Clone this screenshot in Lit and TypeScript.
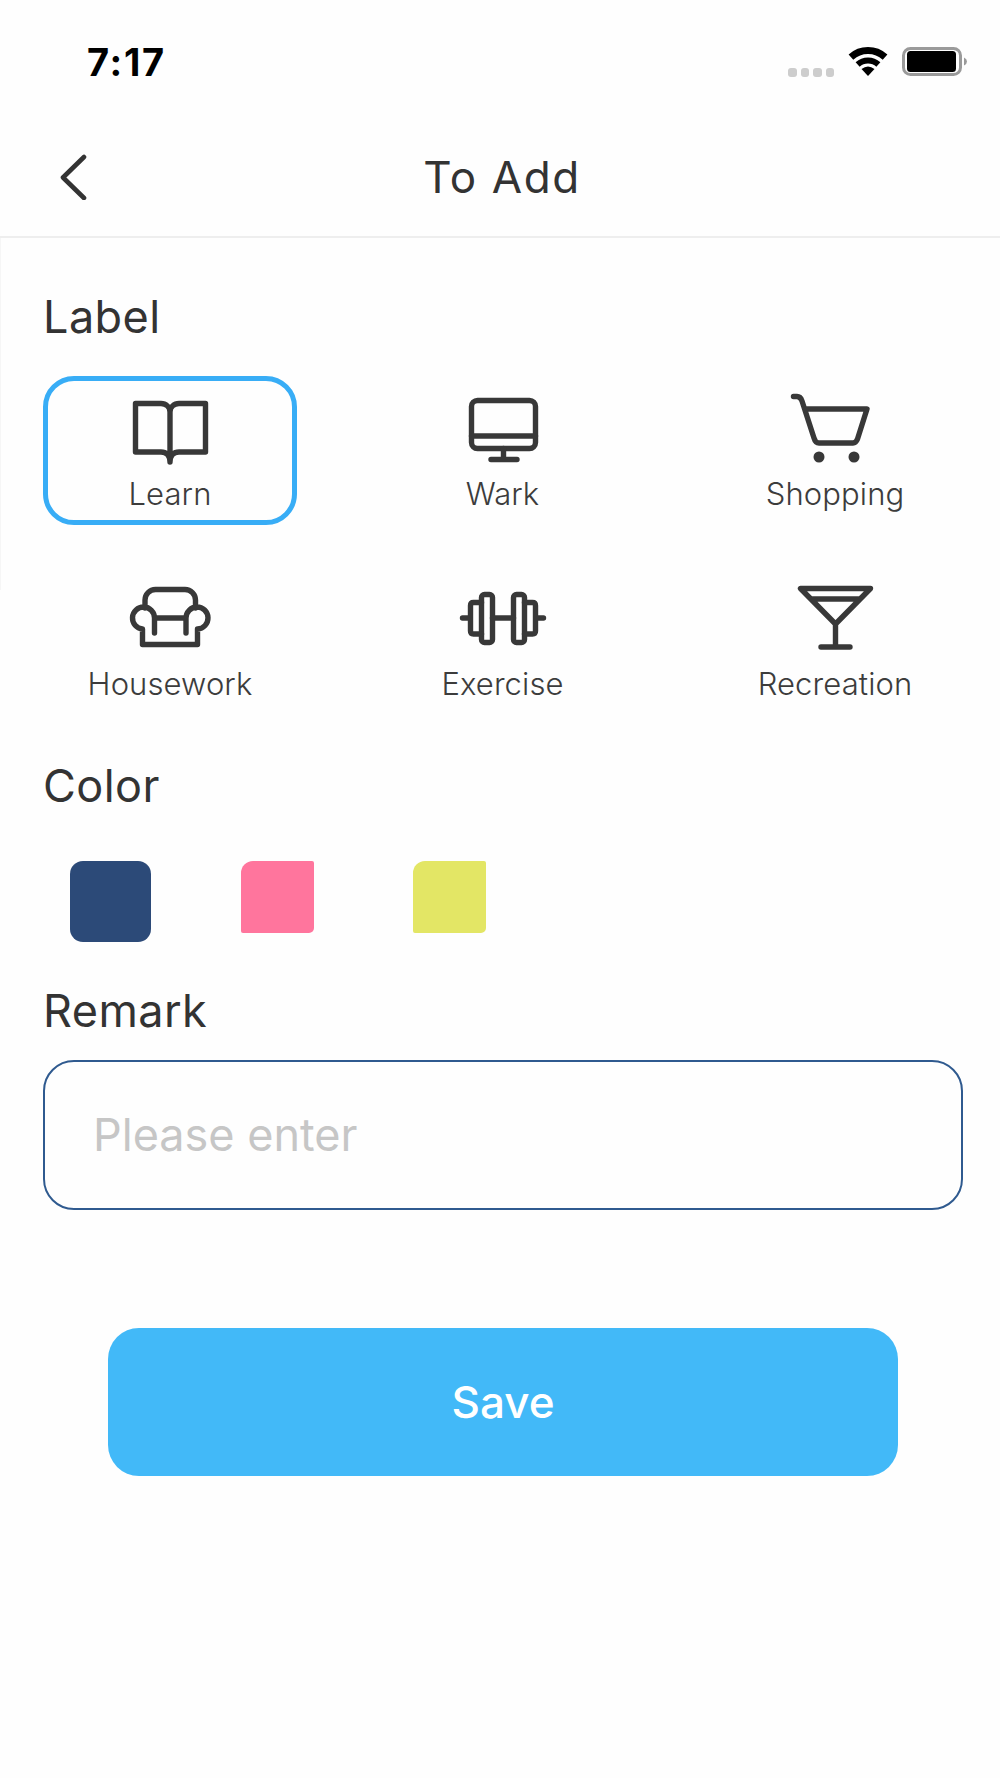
import { LitElement, html, css, svg } from "lit";
import { customElement } from "lit/decorators.js";

const ICONS = {
  learn: svg`<path d="M45 69V19C45 14 41 10.5 36 10.5H10.5V59H36C41 59 45 62 45 69C45 62 49 59 54 59H80.5V10.5H54C49 10.5 45 14 45 19"/>`,
  wark: svg`<rect x="13.5" y="7.5" width="64" height="48" rx="6"/><path d="M13.5 43H77.5M45.5 55.5V66.5M33 66.5H59"/>`,
  shopping: svg`<path d="M3.5 3.5H7C10 3.5 11 5 12 8L24 45C25 48.5 26.5 50 29 50H63C65.5 50 66.5 48.5 67.5 46L77 16H16"/><circle class="fill" cx="29" cy="64" r="5.5"/><circle class="fill" cx="64" cy="64" r="5.5"/>`,
  housework: svg`<path d="M29.5 50V35A11 11 0 1 0 17.5 46V61.5H72.5V46A11 11 0 1 0 61 35V50M29.5 35H61M20 25V17A10.5 10.5 0 0 1 30.5 6.5H60A10.5 10.5 0 0 1 70.5 17V25"/>`,
  exercise: svg`<rect x="23.5" y="11.5" width="11" height="48" rx="3"/><rect x="55.5" y="11.5" width="11" height="48" rx="3"/><path d="M23.5 19.5H15.5Q12.5 19.5 12.5 22.5V48Q12.5 51 15.5 51H23.5M66.5 19.5H74.5Q77.5 19.5 77.5 22.5V48Q77.5 51 74.5 51H66.5M4.5 35H12.5M77.5 35H85.5M34.5 35H55.5"/>`,
  recreation: svg`<path d="M10.5 5.5H80.5L45.5 41ZM21 16H70M45.5 41V64M31 64H60"/>`,
};

const TILES: [keyof typeof ICONS, string][] = [
  ["learn", "Learn"],
  ["wark", "Wark"],
  ["shopping", "Shopping"],
  ["housework", "Housework"],
  ["exercise", "Exercise"],
  ["recreation", "Recreation"],
];

@customElement("app-root")
export class AppRoot extends LitElement {
  static styles = css`
    :host {
      display: block;
      width: 1000px;
      height: 1778px;
      background: #fefefe;
      font-family: Inter, "Liberation Sans", sans-serif;
      color: #333;
      overflow: hidden;
      position: relative;
    }
    .edge {
      position: absolute;
      left: 0;
      top: 238px;
      width: 1px;
      height: 352px;
      background: #f6f6f6;
    }
    .status {
      height: 88px;
      display: flex;
      justify-content: space-between;
      align-items: flex-start;
      padding: 40px 33px 0 87px;
      box-sizing: border-box;
    }
    .time {
      font-size: 38px;
      line-height: 44px;
      font-weight: 700;
      letter-spacing: 1.7px;
      color: #000;
    }
    .indicators {
      display: flex;
      align-items: flex-start;
      margin-top: 7px;
    }
    .dots {
      display: flex;
      gap: 4px;
      margin: 21px 14px 0 0;
    }
    .dots i {
      width: 8.5px;
      height: 9px;
      border-radius: 3px;
      background: #cdcdcd;
    }
    .wifi {
      width: 40px;
      height: 29px;
      margin-right: 14px;
    }
    .battery {
      width: 65px;
      height: 29px;
    }
    .nav {
      height: 150px;
      box-sizing: border-box;
      border-bottom: 2px solid #eeeeee;
      display: flex;
      align-items: center;
      justify-content: center;
      position: relative;
    }
    .back {
      position: absolute;
      left: 58px;
      top: 64px;
      width: 30px;
      height: 48px;
    }
    .title {
      font-size: 44px;
      line-height: 52px;
      margin: 29px 0 0 4px;
      font-weight: 400;
      letter-spacing: 1.6px;
    }
    .content {
      padding: 57px 37px 0 43px;
    }
    h2 {
      margin: 0;
      font-size: 45px;
      line-height: 44px;
      font-weight: 400;
      letter-spacing: 0.45px;
    }
    .grid {
      display: grid;
      grid-template-columns: repeat(3, 254px);
      column-gap: 78.5px;
      row-gap: 41px;
      margin: 37px 0 49px;
    }
    .tile {
      box-sizing: border-box;
      height: 149px;
      border: 5px solid transparent;
      border-radius: 31px;
      padding-top: 12px;
      display: flex;
      flex-direction: column;
      align-items: center;
    }
    .tile.on {
      border-color: #38adf6;
    }
    .tile svg {
      width: 90px;
      height: 72px;
      fill: none;
      stroke: #383838;
      stroke-width: 5.4;
      stroke-linecap: round;
      stroke-linejoin: round;
      flex: none;
    }
    .tile .fill {
      fill: #383838;
      stroke: none;
    }
    .tile span {
      margin-top: 11px;
      font-size: 31px;
      line-height: 36px;
      font-weight: 350;
      letter-spacing: 0.1px;
      color: #3c3c3c;
    }
    .swatches {
      display: flex;
      align-items: flex-start;
      margin: 53px 0 47px 26.5px;
      height: 81px;
    }
    .swatch {
      width: 73px;
      height: 72px;
      margin-right: 99px;
      border-radius: 12px 2px 5px 2px;
    }
    .swatch.navy {
      width: 81.5px;
      height: 81px;
      margin-right: 90px;
      border-radius: 13px;
      background: #2c4a78;
    }
    .swatch.pink {
      background: #ff759d;
    }
    .swatch.yellow {
      background: #e3e665;
    }
    .input {
      margin-top: 27px;
      box-sizing: border-box;
      height: 150px;
      border: 2.5px solid #2f5a8f;
      border-radius: 31px;
      padding: 0 0 2px 48px;
      display: flex;
      align-items: center;
      font-size: 45px;
      color: #c6c6c6;
    }
    .save {
      margin: 118px 65px 0;
      height: 148px;
      border-radius: 31px;
      background: #42b9f8;
      color: #fff;
      font-size: 44px;
      font-weight: 500;
      display: flex;
      align-items: center;
      justify-content: center;
    }
  `;

  render() {
    return html`
      <div class="edge"></div>
      <div class="status">
        <div class="time">7:17</div>
        <div class="indicators">
          <div class="dots"><i></i><i></i><i></i><i></i></div>
          <svg class="wifi" viewBox="0 0 40 29" fill="none" stroke="#000">
            <path d="M2.94 10.05A25.5 25.5 0 0 1 37.06 10.05" stroke-width="7" />
            <path d="M9.63 17.48A15.5 15.5 0 0 1 30.37 17.48" stroke-width="6" />
            <path d="M20 29L13.5 22Q20 17 26.5 22Z" fill="#000" stroke="none" />
          </svg>
          <svg class="battery" viewBox="0 0 65 29">
            <rect x="1.5" y="1.5" width="57" height="26" rx="7" fill="none" stroke="#9a9a9a" stroke-width="3" />
            <rect x="5" y="4" width="49" height="21" rx="3.5" fill="#000" />
            <path d="M62 10.5Q65 12 65 14.5Q65 17 62 18.5Z" fill="#9a9a9a" />
          </svg>
        </div>
      </div>
      <div class="nav">
        <svg class="back" viewBox="0 0 30 48" fill="none" stroke="#333" stroke-width="4.6" stroke-linecap="round" stroke-linejoin="round">
          <path d="M26 5L5 25.5L26 46" />
        </svg>
        <div class="title">To Add</div>
      </div>
      <div class="content">
        <h2>Label</h2>
        <div class="grid">
          ${TILES.map(
            ([key, label], i) => html`
              <div class="tile ${i === 0 ? "on" : ""}">
                <svg viewBox="0 0 90 72">${ICONS[key]}</svg>
                <span>${label}</span>
              </div>
            `
          )}
        </div>
        <h2>Color</h2>
        <div class="swatches">
          <div class="swatch navy"></div>
          <div class="swatch pink"></div>
          <div class="swatch yellow"></div>
        </div>
        <h2>Remark</h2>
        <div class="input">Please enter</div>
        <div class="save">Save</div>
      </div>
    `;
  }
}
